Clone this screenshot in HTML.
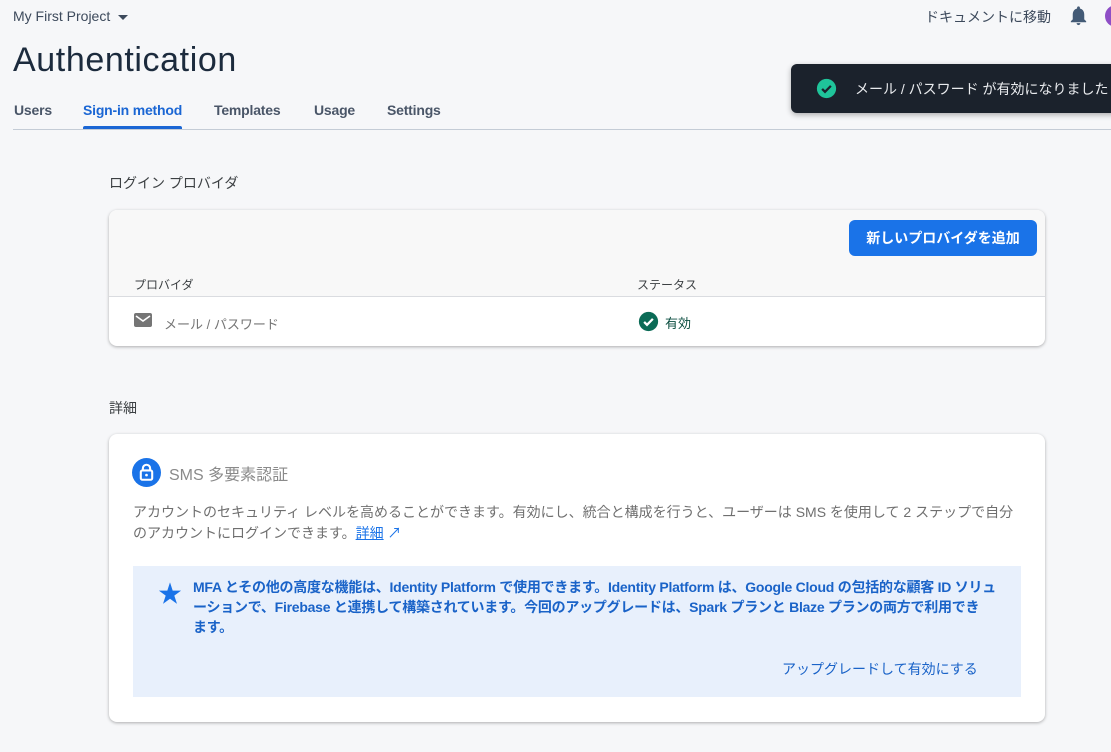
<!DOCTYPE html>
<html><head><meta charset="utf-8"><style>
*{box-sizing:border-box;margin:0;padding:0}
body{width:1111px;height:752px;overflow:hidden;background:#f6f7f9;font-family:"Liberation Sans","Noto Sans CJK JP",sans-serif;position:relative;color:#3c4043}
.a{position:absolute;white-space:nowrap}
.card{position:absolute;background:#fff;border-radius:8px;box-shadow:0 1px 3px rgba(0,0,0,.3)}
</style></head><body>
<div class="a" style="left:13px;top:8px;font-size:14px;color:#3d4a5c">My First Project <span style="display:inline-block;border-left:5px solid transparent;border-right:5px solid transparent;border-top:5px solid #3d4a5c;vertical-align:middle;margin-left:4px"></span></div>
<div class="a" style="left:925px;top:7px;font-size:14px;color:#3d4a5c">ドキュメントに移動</div>
<svg class="a" style="left:1067px;top:4px" width="23" height="23" viewBox="0 0 24 24"><path fill="#435a76" d="M12 22c1.1 0 2-.9 2-2h-4c0 1.1.9 2 2 2zm6-6v-5c0-3.1-1.6-5.6-4.5-6.3V4c0-.8-.7-1.5-1.5-1.5s-1.5.7-1.5 1.5v.7C7.6 5.4 6 7.9 6 11v5l-2 2v1h16v-1l-2-2z"/></svg>
<div class="a" style="left:1105px;top:5px;width:22px;height:22px;border-radius:50%;background:#8e4ec6"></div>
<div class="a" style="left:13px;top:41px;font-size:34px;letter-spacing:0.6px;color:#1c2b3d">Authentication</div>
<div class="a" style="left:14px;top:102px;font-size:14px;letter-spacing:-0.2px;color:#4a5668;font-weight:bold">Users</div>
<div class="a" style="left:83px;top:102px;font-size:14px;letter-spacing:-0.2px;color:#1a66d4;font-weight:bold">Sign-in method</div>
<div class="a" style="left:83px;top:126px;width:99px;height:3px;background:#1a66d4;border-radius:2px 2px 0 0"></div>
<div class="a" style="left:214px;top:102px;font-size:14px;letter-spacing:-0.2px;color:#4a5668;font-weight:bold">Templates</div>
<div class="a" style="left:314px;top:102px;font-size:14px;letter-spacing:-0.2px;color:#4a5668;font-weight:bold">Usage</div>
<div class="a" style="left:387px;top:102px;font-size:14px;letter-spacing:-0.2px;color:#4a5668;font-weight:bold">Settings</div>
<div class="a" style="left:13px;top:129px;width:1098px;height:1px;background:#c4ccd6"></div>
<div class="a" style="left:791px;top:64px;width:330px;height:49px;background:#1b222c;border-radius:6px;box-shadow:0 2px 6px rgba(0,0,0,.3)"></div>
<svg class="a" style="left:816px;top:78px" width="21" height="21" viewBox="0 0 24 24"><circle cx="12" cy="12" r="11" fill="#1fc49a"/><path d="M7 12.5l3.3 3.3L17 9" stroke="#1b222c" stroke-width="2.6" fill="none"/></svg>
<div class="a" style="left:855px;top:79px;font-size:14px;color:#e8eaed">メール / パスワード が有効になりました</div>
<div class="a" style="left:109px;top:173px;font-size:14px;color:#3c4043">ログイン プロバイダ</div>
<div class="card" style="left:109px;top:210px;width:936px;height:136px;overflow:hidden">
<div style="position:absolute;left:0;top:0;width:100%;height:87px;background:#f8f8f8;border-bottom:1px solid #dadce0"></div>
<div class="a" style="left:740px;top:10px;width:188px;height:36px;background:#1a73e8;border-radius:6px;color:#fff;font-size:14px;font-weight:bold;text-align:center;line-height:36px">新しいプロバイダを追加</div>
<div class="a" style="left:25px;top:66px;font-size:12px;color:#3c4043">プロバイダ</div>
<div class="a" style="left:528px;top:66px;font-size:12px;color:#3c4043">ステータス</div>
<svg class="a" style="left:24px;top:101px" width="20" height="18" viewBox="0 0 20 18"><rect x="1" y="2" width="18" height="14" rx="2" fill="#757575"/><path d="M3 5l7 5 7-5" stroke="#fff" stroke-width="1.6" fill="none"/></svg>
<div class="a" style="left:55px;top:104px;font-size:13px;color:#757575">メール / パスワード</div>
<svg class="a" style="left:529px;top:101px" width="21" height="21" viewBox="0 0 24 24"><circle cx="12" cy="12" r="11" fill="#0b6b56"/><path d="M7 12.5l3.3 3.3L17 9" stroke="#fff" stroke-width="2.6" fill="none"/></svg>
<div class="a" style="left:556px;top:103px;font-size:13px;color:#0b4e40">有効</div>
</div>
<div class="a" style="left:109px;top:398px;font-size:14px;color:#3c4043">詳細</div>
<div class="card" style="left:109px;top:434px;width:936px;height:288px">
<svg class="a" style="left:23px;top:24px" width="29" height="29" viewBox="0 0 28 28"><circle cx="14" cy="14" r="14" fill="#1a73e8"/><rect x="8.5" y="12" width="11" height="9" rx="1.5" fill="none" stroke="#fff" stroke-width="2"/><path d="M10.5 12V10a3.5 3.5 0 0 1 7 0v2" fill="none" stroke="#fff" stroke-width="2"/><circle cx="14" cy="16.5" r="1.3" fill="#fff"/></svg>
<div class="a" style="left:60px;top:27px;font-size:16px;color:#8a8a8a">SMS 多要素認証</div>
<div class="a" style="left:24px;top:68px;font-size:14px;color:#6f6f6f;line-height:21px">アカウントのセキュリティ レベルを高めることができます。有効にし、統合と構成を行うと、ユーザーは SMS を使用して 2 ステップで自分<br>のアカウントにログインできます。<span style="color:#1a73e8;text-decoration:underline">詳細</span><span style="color:#1a73e8"> ↗</span></div>
<div class="a" style="left:24px;top:132px;width:888px;height:131px;background:#e8f0fc"></div>
<div class="a" style="left:49px;top:140px;font-size:24px;color:#1a73e8">★</div>
<div class="a" style="left:84px;top:143px;font-size:14px;letter-spacing:-0.25px;color:#1a63c8;line-height:20px;font-weight:bold">MFA とその他の高度な機能は、Identity Platform で使用できます。Identity Platform は、Google Cloud の包括的な顧客 ID ソリュ<br>ーションで、Firebase と連携して構築されています。今回のアップグレードは、Spark プランと Blaze プランの両方で利用でき<br>ます。</div>
<div class="a" style="left:673px;top:225px;font-size:14px;color:#1a63c8">アップグレードして有効にする</div>
</div>
</body></html>
